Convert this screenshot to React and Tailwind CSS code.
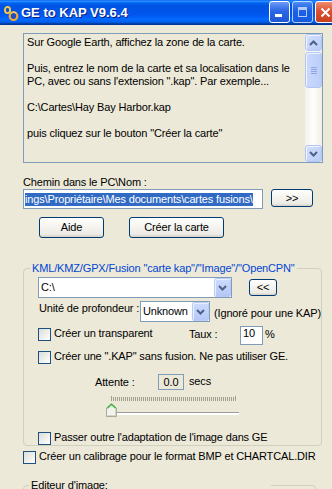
import React from "react";

const TITLE_BG =
  "bg-[linear-gradient(180deg,#0058ee_0%,#3593ff_4%,#288eff_6%,#127dff_8%,#036ffc_10%,#0262ee_14%,#0057e5_20%,#0054e3_24%,#0055eb_56%,#005bf5_66%,#026afe_76%,#0062ef_86%,#0052d6_92%,#0040ab_94%,#003092_100%)]";

const memoLines = [
  "Sur Google Earth, affichez la zone de la carte.",
  "",
  "Puis, entrez le nom de la carte et sa localisation dans le",
  'PC, avec ou sans l\'extension ".kap". Par exemple...',
  "",
  "C:\\Cartes\\Hay Bay Harbor.kap",
  "",
  'puis cliquez sur le bouton "Créer la carte"',
];

function XPButton({ className, children }) {
  return (
    <button
      className={`flex items-center justify-center rounded-[3px] border border-[#003C74] bg-[linear-gradient(180deg,#FFFFFF_0%,#F5F4EF_45%,#ECEBE6_85%,#D6D0C5_100%)] text-black ${className}`}
    >
      {children}
    </button>
  );
}

function Check() {
  return (
    <span className="block h-[13px] w-[13px] shrink-0 border border-[#1C5180] bg-[linear-gradient(135deg,#DCDCD7,#FFFFFF)]" />
  );
}

function Chevron({ up }) {
  return (
    <svg width="9" height="6" viewBox="0 0 9 6">
      <path
        d={up ? "M1 5 L4.5 1.5 L8 5" : "M1 1 L4.5 4.5 L8 1"}
        fill="none"
        stroke="#4D6185"
        strokeWidth="2"
      />
    </svg>
  );
}

function DropBtn() {
  return (
    <span className="flex h-full w-[17px] items-center justify-center rounded-[2px] border border-[#BACCF6] bg-[linear-gradient(180deg,#CDDBFD,#B4C8F6)] shadow-[inset_1px_1px_0_#E8EFFD]">
      <Chevron />
    </span>
  );
}

function ScrollBtn({ up }) {
  return (
    <span className="flex h-[17px] w-[17px] items-center justify-center rounded-[3px] border border-[#B3C6F3] bg-[linear-gradient(135deg,#D3DFFD,#B9CCF8)] shadow-[inset_1px_1px_0_#F0F4FE]">
      <Chevron up={up} />
    </span>
  );
}

function Scrollbar() {
  return (
    <div className="flex w-[17px] flex-col bg-[linear-gradient(90deg,#F3F1EC,#FEFEFB_50%,#F1EFE7)]">
      <ScrollBtn up />
      <div className="mt-[1px] flex h-[36px] flex-col items-center justify-center gap-[1px] rounded-[3px] border border-[#B3C6F3] bg-[linear-gradient(90deg,#CAD9FC,#BCCEF9)] shadow-[inset_1px_1px_0_#F0F4FE]">
        <span className="h-[1px] w-[6px] bg-[#8DA5E2]" />
        <span className="h-[1px] w-[6px] bg-[#8DA5E2]" />
        <span className="h-[1px] w-[6px] bg-[#8DA5E2]" />
        <span className="h-[1px] w-[6px] bg-[#8DA5E2]" />
      </div>
      <div className="flex-1" />
      <ScrollBtn />
    </div>
  );
}

function TitleBar() {
  return (
    <div className={`flex h-[25px] w-[340px] items-center ${TITLE_BG}`}>
      <svg className="ml-[2px]" width="17" height="17" viewBox="0 0 17 17">
        <ellipse cx="5.5" cy="6" rx="2.6" ry="3.2" fill="#1D4FC4" stroke="#F7CF4A" strokeWidth="1.8" />
        <ellipse cx="11.5" cy="12" rx="3.8" ry="4" fill="#1D4FC4" stroke="#F2A93A" strokeWidth="2.2" />
        <path d="M9 9.5 A3.8 4 0 0 1 14 9" fill="none" stroke="#FCE27A" strokeWidth="1" />
      </svg>
      <span className="ml-[2px] whitespace-nowrap text-[13px] font-bold tracking-normal text-white [text-shadow:1px_1px_#0A1E8C]">
        GE to KAP V9.6.4
      </span>
      <div className="mr-[4px] mt-[1px] ml-auto flex gap-[2px] self-start">
        <span className="flex h-[22px] w-[21px] items-end rounded-[3px] border border-white bg-[linear-gradient(180deg,#6C9BF8,#2B66E3_45%,#1E56D6)] pb-[5px] pl-[5px]">
          <span className="h-[3px] w-[7px] bg-white" />
        </span>
        <span className="flex h-[22px] w-[21px] items-center justify-center rounded-[3px] border border-white bg-[linear-gradient(180deg,#6C9BF8,#2B66E3_45%,#1E56D6)] opacity-70">
          <span className="h-[10px] w-[9px] border border-t-[3px] border-white" />
        </span>
        <span className="flex h-[22px] w-[21px] items-center justify-center rounded-[3px] border border-white bg-[linear-gradient(180deg,#EE8E6F,#DA5233_45%,#C7401F)]">
          <svg width="11" height="11" viewBox="0 0 11 11">
            <path d="M1.5 1.5 L9.5 9.5 M9.5 1.5 L1.5 9.5" stroke="#fff" strokeWidth="2" />
          </svg>
        </span>
      </div>
    </div>
  );
}

function Memo() {
  return (
    <div className="mt-[8px] flex h-[130px] w-[300px] border border-[#7F9DB9]">
      <div className="flex-1 overflow-hidden pl-[3px] pt-[2px]">
        {memoLines.map((line, i) => (
          <div key={i} className="h-[13px] whitespace-nowrap">
            {line}
          </div>
        ))}
      </div>
      <Scrollbar />
    </div>
  );
}

export default function App() {
  return (
    <div className="h-[489px] w-[332px] overflow-hidden bg-[#ECE9D8] font-['Liberation_Sans',Arial,sans-serif] text-[11px] leading-[13px] tracking-[-0.15px] text-black">
      <TitleBar />
      <div className="pl-[23px]">
        <Memo />

        <div className="mt-[13px] h-[13px] whitespace-nowrap">Chemin dans le PC\Nom :</div>
        <div className="flex items-start">
          <div className="flex h-[20px] w-[240px] items-center border border-[#7F9DB9] bg-white">
            <div className="ml-[1px] w-[234px] overflow-hidden">
              <span className="inline-block whitespace-nowrap bg-[#316AC5] text-white">
                ings\Propriétaire\Mes documents\cartes fusions\
              </span>
            </div>
          </div>
          <XPButton className="ml-[8px] h-[18px] w-[42px]">&gt;&gt;</XPButton>
        </div>

        <div className="mt-[8px] flex">
          <XPButton className="ml-[16px] h-[21px] w-[65px]">Aide</XPButton>
          <XPButton className="ml-[25px] h-[21px] w-[95px]">Créer la carte</XPButton>
        </div>

        <fieldset className="mt-[24px] w-[293px] rounded-[4px] border border-[#D0D0BF] p-0">
          <legend className="ml-[6px] whitespace-nowrap px-[2px] text-[#0046D5]">
            KML/KMZ/GPX/Fusion "carte kap"/"Image"/"OpenCPN"
          </legend>
          <div className="pl-[14px] pt-[2px]">
            <div className="flex items-start">
              <div className="flex h-[21px] w-[194px] border border-[#7F9DB9] bg-white">
                <span className="flex-1 pl-[2px] pt-[3px]">C:\</span>
                <DropBtn />
              </div>
              <XPButton className="ml-[17px] mt-[2px] h-[17px] w-[28px]">&lt;&lt;</XPButton>
            </div>

            <div className="mt-[3px] flex items-start">
              <span className="mt-[1px] w-[102px] whitespace-nowrap pl-[1px]">Unité de profondeur :</span>
              <div className="flex h-[21px] w-[70px] border border-[#7F9DB9] bg-white">
                <span className="flex-1 pl-[2px] pt-[3px]">Unknown</span>
                <DropBtn />
              </div>
              <span className="ml-[4px] mt-[6px] whitespace-nowrap">(Ignoré pour une KAP)</span>
            </div>

            <div className="mt-[4px] flex items-start">
              <div className="mt-[2px] flex w-[151px] items-start">
                <Check />
                <span className="-mt-[1px] ml-[3px] whitespace-nowrap">Créer un transparent</span>
              </div>
              <span className="mt-[2px] w-[51px] whitespace-nowrap">Taux :</span>
              <div className="h-[19px] w-[23px] border border-[#7F9DB9] bg-white pl-[2px]">10</div>
              <span className="ml-[2px] mt-[2px]">%</span>
            </div>

            <div className="mt-[6px] flex items-start">
              <Check />
              <span className="-mt-[1px] ml-[3px] whitespace-nowrap">
                Créer une ".KAP" sans fusion. Ne pas utiliser GE.
              </span>
            </div>

            <div className="mt-[10px] flex items-start">
              <span className="ml-[57px] mt-[2px] w-[63px] whitespace-nowrap">Attente :</span>
              <div className="h-[16px] w-[26px] border border-[#7F9DB9] pt-[1px] text-center">0.0</div>
              <span className="ml-[5px] mt-[1px]">secs</span>
            </div>

            <div className="ml-[68px] mt-[6px] w-[134px]">
              <div className="ml-[5px] flex h-[5px] w-[125px] items-end">
                <span className="h-[5px] w-[1px] bg-[#A19F8D]" />
                <span className="h-[4px] flex-1 bg-[repeating-linear-gradient(90deg,transparent_0_1px,#A19F8D_1px_2px)]" />
                <span className="h-[5px] w-[1px] bg-[#A19F8D]" />
              </div>
              <div className="mt-[2px] flex h-[14px] items-start">
                <svg width="11" height="14" viewBox="0 0 11 14">
                  <path d="M0.5 5 L5.5 0.5 L10.5 5 V13.5 H0.5 Z" fill="#F3F3EE" stroke="#A9A99C" />
                  <path d="M1.3 5.2 L5.5 1.4 L9.7 5.2" fill="none" stroke="#3DBA3D" strokeWidth="1.4" />
                  <path d="M9.5 6 V12.5 H1.5" fill="none" stroke="#D4D4CA" />
                </svg>
                <div className="mt-[9px] h-[3px] w-[122px] border-t border-[#9D9C99] bg-white" />
              </div>
            </div>

            <div className="mt-[15px] flex items-start">
              <Check />
              <span className="-mt-[1px] ml-[3px] whitespace-nowrap">
                Passer outre l'adaptation de l'image dans GE
              </span>
            </div>
          </div>
        </fieldset>

        <div className="mt-[5px] flex items-start">
          <Check />
          <span className="-mt-[1px] ml-[3px] whitespace-nowrap">
            Créer un calibrage pour le format BMP et CHARTCAL.DIR
          </span>
        </div>

        <fieldset className="mt-[15px] h-[60px] w-[293px] rounded-[4px] border border-[#D0D0BF] p-0">
          <legend className="ml-[5px] w-[242px] whitespace-nowrap px-[2px]">Editeur d'image:</legend>
        </fieldset>
      </div>
    </div>
  );
}
